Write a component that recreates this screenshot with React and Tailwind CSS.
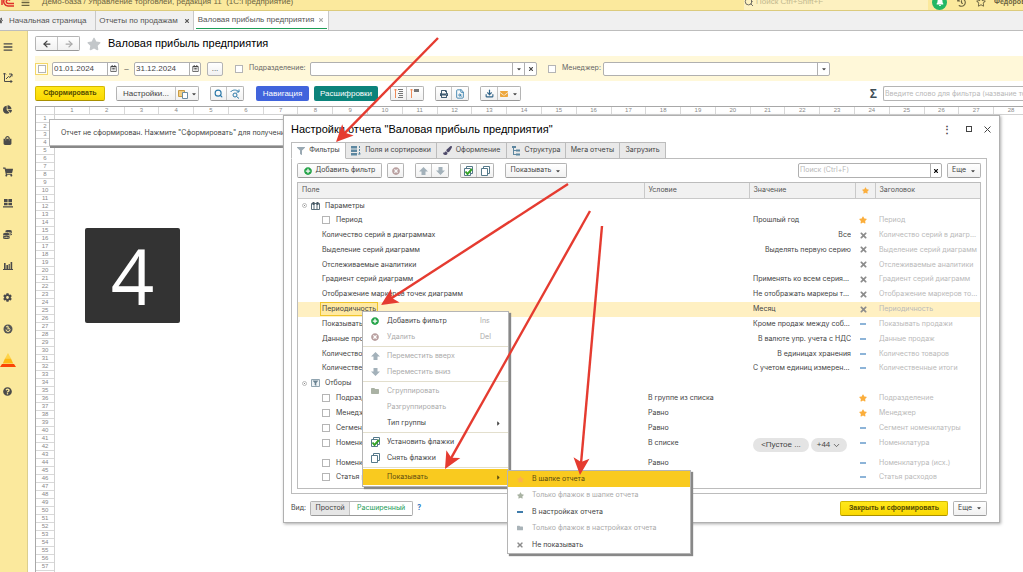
import React from 'react';
import {
    FaBars, FaChartPie, FaShoppingBag, FaShoppingCart, FaCog, FaQuestionCircle, FaStar, FaTimes,
    FaCaretDown, FaCaretRight, FaPlusCircle, FaTimesCircle, FaPrint, FaEnvelope, FaFilter, FaRegStar,
    FaHistory, FaBell, FaRegCalendarAlt, FaPaintBrush, FaHome, FaFolder, FaCoins,
} from 'react-icons/fa';
import { Search, ArrowLeft, ArrowRight, ChevronDown, Download, FileSearch } from 'lucide-react';

const BTN = 'flex items-center justify-center bg-linear-to-b from-white to-[#f1f1f1] text-[#444]';
const GROUP = 'flex h-[15px] shrink-0 rounded-xs border border-[#b4b4b4] border-b-[#999] divide-x divide-[#c4c4c4] overflow-hidden';
const SMALL = "font-['Inter','Liberation_Sans',sans-serif] text-[7px]";
const YELLOW = 'h-[15px] rounded-xs border border-[#d4b800] border-b-[#a89000] bg-linear-to-b from-[#ffe81a] to-[#fad800] text-[7px] font-bold text-[#554b00]';

/* ---------- small icons ---------- */

const Pyramid = () => (
    <svg width="16" height="14" viewBox="0 0 16 14">
        <path d="M8 0l3 5.5H5z" fill="#fdd44a" />
        <path d="M5 5.5h6l2.2 5H2.8z" fill="#fdb913" />
        <path d="M2 11h12l2 3H0z" fill="#fb4406" />
    </svg>
);

const Coin = () => (
    <svg width="10" height="10" viewBox="0 0 10 10">
        <circle cx="5" cy="5" r="4.5" fill="#555" />
        <path d="M3 3l2-1v3.5M3 5.5a2 2 0 1 0 4 0a2 2 0 0 0-2-1.6" stroke="#f9e99a" fill="none" />
    </svg>
);

const Desk = () => (
    <svg width="10" height="10" viewBox="0 0 10 10" fill="#4a4a4a">
        <path d="M1 1h3.6v3H1zM5.4 1H9v3H5.4zM1 4.7h3.6v2.6H1zM5.4 4.7H9v2.6H5.4zM0 8.2h10v1.3H0z" />
    </svg>
);

const Plan = () => (
    <svg width="10" height="11" viewBox="0 0 10 11" stroke="#4a4a4a" fill="none">
        <path d="M1.5 1v8.5H9M0 2.5L1.5 1 3 2.5M3 7l2.5-2.5L7 5.5 9 2M6 2h3v2.500M7.500 8L9 9.500 7.500 11" />
    </svg>
);

const Bars = () => (
    <svg width="10" height="9" viewBox="0 0 10 9" fill="#4a4a4a">
        <path d="M0 8h10v1H0zM1 2h1.6v6H1zM3.4 4H5v4H3.4zM5.6 3h1.2v5H5.6zM7.6 1h1.6v7H7.6z" />
    </svg>
);

const Logo = () => (
    <svg width="15" height="14" viewBox="0 0 15 14" fill="none" stroke="#e0302a" strokeWidth="1.5">
        <path d="M0 4l2-2v8M12 4a4.5 4.5 0 1 0-4 7h6M10 5.5A2 2 0 1 0 8 8.5h6" />
    </svg>
);

const Move = ({ up }) => (
    <svg width="9" height="8" viewBox="0 0 9 8" fill="#a3b1ba">
        {up ? <path d="M4.500 0L9 4.500H6.500V8h-4V4.500H0z" /> : <path d="M4.500 8L0 3.500h2.500V0h4v3.500H9z" />}
    </svg>
);

const Boxes = ({ checked }) => (
    <svg width="9" height="10" viewBox="0 0 9 10" fill="#fff" stroke="#55798a">
        <path d="M2.500.5h6v7h-6z" />
        <path d="M.5 2.500h6v7h-6z" />
        {checked && <path d="M1.500 5.500l2 2.500L8 3" stroke="#36a329" strokeWidth="2" fill="none" />}
    </svg>
);

const Fields = () => (
    <svg width="10" height="10" viewBox="0 0 10 10">
        <path d="M0 0h6v2.500H0zM0 3.500h6V6H0zM0 7h6v2.500H0z" fill="#5d87a0" />
        <path d="M8.500 0v9M7.200 7.500l1.300 1.700 1.200-1.700" stroke="#5d87a0" strokeDasharray="2 1" fill="none" />
    </svg>
);

const Tree = () => (
    <svg width="9" height="10" viewBox="0 0 9 10" fill="#5d87a0">
        <path d="M0 0h4v2H0zM1 2h1v7H1zM1 4h3v1H1zM1 8h3v1H1zM4 3.500h4v2H4zM4 7.500h4v2H4z" />
    </svg>
);

const Params = () => (
    <svg width="9" height="8" viewBox="0 0 9 8">
        <path d="M.5 1.500h8v6h-8zM3 1.500v6M6 1.500v6" stroke="#5a6f7b" fill="none" />
        <path d="M1.500 0h2v3h-2zM5.500 0h2v3h-2z" fill="#4a5b66" />
    </svg>
);

const FilterBox = () => (
    <svg width="9" height="8" viewBox="0 0 9 8">
        <path d="M.5.500h8v7h-8z" stroke="#90a4b0" fill="#eef3f6" />
        <path d="M1.500 1.500h6L5.300 4v3L3.700 6V4z" fill="#6b8392" />
    </svg>
);

const Dash = ({ dark }) => <span className={`inline-block h-[2px] w-1.5 ${dark ? 'bg-[#3f7cab]' : 'bg-[#8db4d8]'}`} />;

const Levels = ({ short }) => (
    <svg width="10" height="11" viewBox="0 0 10 11">
        <path d="M1.500 1v9M0 2.500L1.500 1 3 2.500" stroke="#ee8c5a" fill="none" />
        <path d={short ? 'M4 1h5v3H4z' : 'M4 1h5v1H4zM5 3h4v1H5zM4 5h5v1H4zM5 7h4v1H5zM4 9h5v1H4z'} fill="#777" />
    </svg>
);

const Variants = () => (
    <svg width="11" height="10" viewBox="0 0 11 10">
        <path d="M.5 1.500h6v6h-6z" fill="#f3cf84" stroke="#c99b43" />
        <path d="M4.500 3.500h5v6h-5z" fill="#fff" stroke="#6c8da3" />
    </svg>
);

const Refind = () => (
    <svg width="10" height="10" viewBox="0 0 10 10" fill="none" stroke="#2b78a8">
        <path d="M.5 3C2.500.5 6.500.5 8.500 2.500M9 .5v2.500H6.500" />
        <circle cx="5" cy="6" r="2" />
        <path d="M6.500 7.500L9 9.500" />
    </svg>
);

const Check = ({ label }) => (
    <input
        type="checkbox"
        aria-label={label}
        className="block h-2 w-2 shrink-0 appearance-none border border-[#b5b5b5] bg-white"
    />
);

/* ---------- data ---------- */

const sections = [
    { title: 'Меню', icon: <FaBars size={10} /> },
    { title: 'Планирование', icon: <Plan /> },
    { title: 'CRM', icon: <FaChartPie size={9} /> },
    { title: 'Продажи', icon: <FaShoppingBag size={9} /> },
    { title: 'Закупки', icon: <FaShoppingCart size={10} /> },
    { title: 'Склад', icon: <Desk /> },
    { title: 'Казначейство', icon: <FaCoins size={9} /> },
    { title: 'Финансы', icon: <Bars /> },
    { title: 'Настройки', icon: <FaCog size={9} /> },
    { title: 'Валюта', icon: <Coin /> },
    { title: 'Отчеты', icon: <Pyramid /> },
    { title: 'Помощь', icon: <FaQuestionCircle size={9} /> },
];

const rows = [
    { group: 'Параметры', icon: <Params /> },
    { name: 'Период', check: true, value: 'Прошлый год', mark: 'star', title: 'Период' },
    { name: 'Количество серий в диаграммах', value: 'Все', right: true, mark: 'x', title: 'Количество серий в диаграммах' },
    { name: 'Выделение серий диаграмм', value: 'Выделять первую серию', right: true, mark: 'x', title: 'Выделение серий диаграмм' },
    { name: 'Отслеживаемые аналитики', mark: 'x', title: 'Отслеживаемые аналитики' },
    { name: 'Градиент серий диаграмм', value: 'Применять ко всем сериям диаграмм', mark: 'x', title: 'Градиент серий диаграмм' },
    { name: 'Отображение маркеров точек диаграмм', value: 'Не отображать маркеры точек', mark: 'x', title: 'Отображение маркеров точек' },
    { name: 'Периодичность', value: 'Месяц', mark: 'x', title: 'Периодичность', active: true },
    { name: 'Показывать продажи', value: 'Кроме продаж между собственными', mark: 'dash', title: 'Показывать продажи' },
    { name: 'Данные продаж', value: 'В валюте упр. учета с НДС', right: true, mark: 'dash', title: 'Данные продаж' },
    { name: 'Количество товаров', value: 'В единицах хранения', right: true, mark: 'dash', title: 'Количество товаров' },
    { name: 'Количественные итоги', value: 'С учетом единиц измерения товаров', mark: 'dash', title: 'Количественные итоги' },
    { group: 'Отборы', icon: <FilterBox /> },
    { name: 'Подразделение', check: true, cond: 'В группе из списка', mark: 'star', title: 'Подразделение' },
    { name: 'Менеджер', check: true, cond: 'Равно', mark: 'star', title: 'Менеджер' },
    { name: 'Сегмент номенклатуры', check: true, cond: 'Равно', mark: 'dash', title: 'Сегмент номенклатуры' },
    { name: 'Номенклатура', check: true, cond: 'В списке', mark: 'dash', title: 'Номенклатура', chips: true },
    { name: 'Номенклатура (исх.)', check: true, cond: 'Равно', mark: 'dash', title: 'Номенклатура (исх.)' },
    { name: 'Статья расходов', check: true, mark: 'dash', title: 'Статья расходов' },
];

const marks = {
    star: <FaStar size={8} className="text-[#fbae3c]" />,
    x: <FaTimes size={9} className="text-[#8c8c8c]" />,
    dash: <Dash />,
};

const dialogTabs = [
    { label: 'Фильтры', icon: <FaFilter size={8} className="text-[#9aa9b3]" />, width: 'w-[55px]' },
    { label: 'Поля и сортировки', icon: <Fields />, width: 'w-[91px]' },
    { label: 'Оформление', icon: <FaPaintBrush size={9} className="text-[#4e4a6a]" />, width: 'w-[70px]' },
    { label: 'Структура', icon: <Tree />, width: 'w-[59px]' },
    { label: 'Мега отчеты', width: 'w-[54px]' },
    { label: 'Загрузить', width: 'w-[46px]' },
];

const menuItems = [
    { label: 'Добавить фильтр', key: 'Ins', icon: <FaPlusCircle size={8} className="text-[#22a347]" /> },
    { label: 'Удалить', key: 'Del', off: true, icon: <FaTimesCircle size={8} className="text-[#b9a0a0]" />, line: true },
    { label: 'Переместить вверх', off: true, icon: <Move up /> },
    { label: 'Переместить вниз', off: true, icon: <Move />, line: true },
    { label: 'Сгруппировать', off: true, icon: <FaFolder size={8} className="text-[#aab2a4]" /> },
    { label: 'Разгруппировать', off: true },
    { label: 'Тип группы', more: true, line: true },
    { label: 'Установить флажки', icon: <Boxes checked /> },
    { label: 'Снять флажки', icon: <Boxes />, line: true },
    { label: 'Показывать', more: true, active: true },
];

const showItems = [
    { label: 'В шапке отчета', active: true, icon: <FaStar size={7} className="text-[#fdb04a]" /> },
    { label: 'Только флажок в шапке отчета', off: true, icon: <FaStar size={7} className="text-[#a9b3a3]" /> },
    { label: 'В настройках отчета', icon: <Dash dark /> },
    { label: 'Только флажок в настройках отчета', off: true, icon: <FaFolder size={6} className="text-[#a9b3b8]" /> },
    { label: 'Не показывать', icon: <FaTimes size={8} className="text-[#8c8c8c]" /> },
];

const arrows = [
    [438, 38, 336, 142],
    [568, 184, 381, 305],
    [590, 211, 445, 469],
    [602, 226, 580, 475],
];

/* ---------- parts ---------- */

const TopBar = () => (
    <header className="flex h-[11px] shrink-0 items-end overflow-hidden border-b border-[#dccb7c] bg-[#fbe99d] text-[8px] text-[#6b6340]">
        <div className="flex h-4 w-full items-center">
            <Logo />
            <FaBars size={9} className="ml-1.5" />
            <span className="ml-3 whitespace-nowrap">Демо-база / Управление торговлей, редакция 11&nbsp; (1С:Предприятие)</span>
            <label className="ml-auto flex h-full w-[184px] items-center gap-0.5 bg-[#fdf1c0]">
                <Search size={10} className="shrink-0 text-[#555]" />
                <input aria-label="Поиск" placeholder="Поиск Ctrl+Shift+F" className="w-full placeholder:text-[#c2b88e]" />
            </label>
            <span className="ml-1 flex h-[15px] w-[15px] items-center justify-center rounded-full bg-[#22b765] text-white"><FaBell size={8} /></span>
            <FaHistory size={9} className="ml-2.5" />
            <FaRegStar size={10} className="ml-2.5" />
            <span className="ml-2 w-[29px] overflow-hidden whitespace-nowrap text-[7px] font-bold">Федоров</span>
        </div>
    </header>
);

const PageTabs = () => (
    <nav className="flex h-5 shrink-0 border-b border-[#bdbdbd] bg-[#f0f0f0] text-[8px] text-[#555]">
        <a href="#home" className="flex w-24 items-center gap-1.5 overflow-hidden whitespace-nowrap border-r border-[#c8c8c8]">
            <FaHome size={7} className="-ml-1 shrink-0" />
            Начальная страница
        </a>
        <a href="#sales" className="flex w-[98px] items-center justify-center gap-1.5 whitespace-nowrap border-r border-[#c8c8c8]">
            Отчеты по продажам <FaTimes size={6} />
        </a>
        <a href="#profit" className="flex w-[135px] justify-center border-r border-[#c8c8c8] bg-white">
            <span className="mb-px flex w-[131px] items-center justify-center gap-1 whitespace-nowrap border-b border-[#1e9d57]">
                Валовая прибыль предприятия <FaTimes size={6} className="text-[#aaa]" />
            </span>
        </a>
    </nav>
);

const DateField = ({ label, value }) => (
    <div className="flex h-[14px] w-[67px] rounded-xs border border-[#b0b0b0] bg-white">
        <input aria-label={label} defaultValue={value} className="w-[54px] pl-px" />
        <button aria-label="Календарь" className="flex flex-1 items-center justify-center border-l border-[#b0b0b0]"><FaRegCalendarAlt size={7} /></button>
    </div>
);

const Filters = () => (
    <section className="flex h-[25px] shrink-0 items-center bg-[#fff8d9] text-[8px] text-[#444]">
        <span className="flex h-3 w-[13px] items-center justify-center border border-[#f4d768] bg-[#fffdf2]"><Check label="Период" /></span>
        <div className="ml-1"><DateField label="Начало периода" value="01.01.2024" /></div>
        <span className="w-[15px] text-center">–</span>
        <DateField label="Конец периода" value="31.12.2024" />
        <button aria-label="Выбрать период" className={`${BTN} ml-1.5 h-[14px] w-4 rounded-xs border border-[#b4b4b4]`}>...</button>
        <label className={`ml-3 flex w-[75px] items-center gap-1.5 whitespace-nowrap text-[#666] ${SMALL}`}><Check /> Подразделение:</label>
        <div className="flex h-[14px] w-[227px] rounded-xs border border-[#b0b0b0] bg-white">
            <input aria-label="Подразделение" className="min-w-0 flex-1" />
            <button aria-label="Выбрать" className="flex w-3 items-center justify-center border-l border-[#b0b0b0]"><FaCaretDown size={6} /></button>
            <button aria-label="Очистить" className="flex w-3 items-center justify-center border-l border-[#b0b0b0]"><FaTimes size={6} /></button>
        </div>
        <label className={`ml-[11px] flex w-[55px] items-center gap-1.5 whitespace-nowrap text-[#666] ${SMALL}`}><Check /> Менеджер:</label>
        <div className="flex h-[14px] w-[227px] rounded-xs border border-[#b0b0b0] bg-white">
            <input aria-label="Менеджер" className="min-w-0 flex-1" />
            <button aria-label="Выбрать" className="flex w-3 items-center justify-center border-l border-[#b0b0b0]"><FaCaretDown size={6} /></button>
        </div>
    </section>
);

const ReportToolbar = () => (
    <section className="flex h-[25px] shrink-0 items-center text-[8px]">
        <button className={`${YELLOW} w-[70px]`}>Сформировать</button>
        <div className={`${GROUP} ml-[11px]`}>
            <button className={`${BTN} w-[59px]`}>Настройки...</button>
            <button aria-label="Варианты" className={`${BTN} w-[22px] gap-0.5`}><Variants /><FaCaretDown size={6} /></button>
        </div>
        <div className={`${GROUP} ml-[11px]`}>
            <button aria-label="Найти" className={`${BTN} w-4`}><Search size={9} strokeWidth={3} className="text-[#2b78a8]" /></button>
            <button aria-label="Искать далее" className={`${BTN} w-4`}><Refind /></button>
        </div>
        <button className="ml-3 h-[15px] w-[53px] rounded-xs bg-[#4164dc] text-white">Навигация</button>
        <button className="ml-[5px] h-[15px] w-16 rounded-xs bg-[#0c837b] text-white">Расшифровки</button>
        <div className={`${GROUP} ml-3`}>
            <button aria-label="Развернуть" className={`${BTN} w-4`}><Levels /></button>
            <button aria-label="Свернуть" className={`${BTN} w-4`}><Levels short /></button>
        </div>
        <div className={`${GROUP} ml-[11px]`}>
            <button aria-label="Печать" className={`${BTN} w-4`}><FaPrint size={8} className="text-[#3f5b70]" /></button>
            <button aria-label="Просмотр" className={`${BTN} w-4`}><FileSearch size={10} className="text-[#2b78a8]" /></button>
        </div>
        <div className={`${GROUP} ml-[11px]`}>
            <button aria-label="Сохранить" className={`${BTN} w-[17px]`}><Download size={9} strokeWidth={3} className="text-[#2f6287]" /></button>
            <button aria-label="Отправить" className={`${BTN} w-[22px] gap-1`}><FaEnvelope size={8} className="text-[#eda63c]" /><FaCaretDown size={6} /></button>
        </div>
        <span className="ml-auto text-[12px] font-bold text-[#3d4d57]">Σ</span>
        <input aria-label="Фильтр" placeholder="Введите слово для фильтра (название товара)" className={`ml-1.5 h-[15px] w-[140px] rounded-l-xs border border-r-0 border-[#b4b4b4] pl-px placeholder:text-[#b8b8b8] ${SMALL}`} />
    </section>
);

const Sheet = () => (
    <section className="relative flex min-h-0 flex-1 overflow-hidden border-l border-t border-[#a8a8a8] text-[6px] leading-[7px] text-[#888]">
        <div className="w-[19px] shrink-0 border-r border-[#d2d2d2] text-center">
            <div className="h-2 border-b border-[#d8d8d8]" />
            {Array.from({ length: 57 }, (_, i) => (
                <div key={i} className="h-2 border-b border-[#d8d8d8]">{i + 1}</div>
            ))}
        </div>
        <div className="-mr-[6px] flex h-2 flex-1 border-b border-[#d2d2d2] text-center">
            {Array.from({ length: 28 }, (_, i) => (
                <div key={i} className="flex-1 border-r border-[#d8d8d8]">{i + 1}</div>
            ))}
        </div>
        <div className={`absolute left-[13px] top-3 flex h-[27px] w-[400px] items-center whitespace-nowrap border border-[#b5b5b5] bg-white pl-[11px] text-[#444] shadow-[1px_2px_0_#888] ${SMALL}`}>
            Отчет не сформирован. Нажмите "Сформировать" для получения отчета.
        </div>
        <div className="absolute left-[49px] top-[121px] flex h-[95px] w-[95px] items-center justify-center rounded-xs bg-[#333] font-['Open_Sans',sans-serif] text-[76px] leading-none text-white">
            4
        </div>
    </section>
);

const SettingsTable = () => (
    <div className="flex-1 border border-[#bcbcbc]">
        <table className={`h-[302px] w-full table-fixed border-collapse leading-[10px] text-[#444] ${SMALL}`}>
            <colgroup>
                <col />
                <col className="w-[105px]" />
                <col className="w-[106px]" />
                <col className="w-5" />
                <col className="w-[105px]" />
            </colgroup>
            <thead>
                <tr className="h-[15px] border-b border-[#c9c9c9] bg-[#f1f1f1] text-left text-[#555]">
                    <th className="border-r border-[#c9c9c9] p-0 pl-1 font-normal">Поле</th>
                    <th className="border-r border-[#c9c9c9] p-0 pl-1 font-normal">Условие</th>
                    <th className="border-r border-[#c9c9c9] p-0 pl-1 font-normal">Значение</th>
                    <th className="border-r border-[#c9c9c9] p-0" aria-label="Избранное"><FaStar size={7} className="mx-auto text-[#fbae3c]" /></th>
                    <th className="p-0 pl-1 font-normal">Заголовок</th>
                </tr>
            </thead>
            <tbody>
                {rows.map((row) => row.group ? (
                    <tr key={row.group} className="h-[14px]">
                        <td colSpan={5} className="p-0">
                            <div className="flex items-center pl-1">
                                <span className="flex h-[5px] w-[5px] items-center justify-center rounded-full border border-[#bbb]"><span className="h-px w-px bg-[#888]" /></span>
                                <span className="ml-1 mr-[5px]">{row.icon}</span>
                                {row.group}
                            </div>
                        </td>
                    </tr>
                ) : (
                    <tr key={row.name} className={row.active ? 'h-[14px] bg-[#fff0c2]' : row.chips ? 'h-[19px]' : 'h-[14px]'}>
                        <td className="p-0">
                            <div className={`flex items-center whitespace-nowrap pl-6 ${row.chips ? 'pb-1' : ''}`}>
                                {row.check && <Check label={row.name} />}
                                <span className={row.check ? 'ml-1.5' : row.active ? '-ml-0.5 border border-[#f0c52c] bg-[#ffe9a0] px-px leading-[12px]' : ''}>{row.name}</span>
                            </div>
                        </td>
                        <td className={`p-0 pl-1 ${row.chips ? 'pb-1' : ''}`}>{row.cond}</td>
                        <td className="px-1 py-0">
                            {row.chips ? (
                                <div className="flex gap-0.5 font-['Liberation_Sans',sans-serif] text-[8px]">
                                    <button className="h-[14px] w-14 rounded-full bg-[#e4e4e4]">&lt;Пустое ...</button>
                                    <button className="flex h-[14px] w-9 items-center justify-center gap-0.5 rounded-full bg-[#e4e4e4]">+44 <ChevronDown size={9} /></button>
                                </div>
                            ) : (
                                <div className={`truncate ${row.right ? 'text-right' : ''}`}>{row.value}</div>
                            )}
                        </td>
                        <td className={`p-0 ${row.chips ? 'pb-1' : ''}`}><div className="flex items-center justify-center pr-1">{marks[row.mark]}</div></td>
                        <td className={`py-0 pl-1 pr-0.5 text-[#b9b9b9] ${row.chips ? 'pb-1' : ''}`}><div className="truncate">{row.title}</div></td>
                    </tr>
                ))}
            </tbody>
        </table>
    </div>
);

const SettingsDialog = () => (
    <div role="dialog" aria-label="Настройки отчета" className="absolute left-[283px] right-[23px] top-[115px] flex h-[408px] flex-col border border-[#b0b0b0] bg-white pl-[7px] pr-3 shadow-[1px_1px_3px_#aaa]">
        <div className="flex h-[26px] shrink-0 items-center">
            <h2 className="text-[11px] text-black">Настройки отчета "Валовая прибыль предприятия"</h2>
            <button aria-label="Меню" className="ml-auto text-[10px] font-bold text-[#444]">⋮</button>
            <button aria-label="Развернуть" className="ml-3.5 h-1.5 w-1.5 border border-[#444]" />
            <button aria-label="Закрыть" className="-mr-1 ml-3 text-[#444]">
                <svg width="7" height="7" viewBox="0 0 7 7" stroke="currentColor"><path d="M.5.5l6 6M6.500.5l-6 6" /></svg>
            </button>
        </div>
        <div role="tablist" className={`z-10 -mb-px flex h-[17px] shrink-0 text-[#444] ${SMALL}`}>
            {dialogTabs.map((tab, i) => (
                <button
                    key={tab.label}
                    role="tab"
                    aria-selected={i === 0}
                    className={`flex items-center justify-center gap-1 whitespace-nowrap border border-l-0 border-[#bcbcbc] first:border-l ${tab.width} ${i === 0 ? 'border-b-white bg-white' : 'bg-[#e9e9e9]'}`}
                >
                    {tab.icon}
                    {tab.label}
                </button>
            ))}
        </div>
        <div className="flex min-h-0 flex-1 flex-col border border-[#bcbcbc] px-[5px] pb-1">
            <div className={`flex h-[23px] shrink-0 items-center ${SMALL}`}>
                <div className={GROUP}><button className={`${BTN} w-[83px] gap-1`}><FaPlusCircle size={8} className="text-[#22a347]" /> Добавить фильтр</button></div>
                <div className={`${GROUP} ml-[5px]`}><button aria-label="Удалить" className={`${BTN} w-[15px]`}><FaTimesCircle size={8} className="text-[#b9a0a0]" /></button></div>
                <div className={`${GROUP} ml-[11px]`}>
                    <button aria-label="Вверх" className={`${BTN} w-4`}><Move up /></button>
                    <button aria-label="Вниз" className={`${BTN} w-4`}><Move /></button>
                </div>
                <div className={`${GROUP} ml-[11px]`}>
                    <button aria-label="Установить флажки" className={`${BTN} w-4`}><Boxes checked /></button>
                    <button aria-label="Снять флажки" className={`${BTN} w-4`}><Boxes /></button>
                </div>
                <div className={`${GROUP} ml-[11px]`}><button className={`${BTN} w-[60px] gap-1`}>Показывать <FaCaretDown size={6} /></button></div>
                <div className="ml-auto flex h-[15px] w-36 rounded-xs border border-[#b0b0b0]">
                    <input aria-label="Поиск" placeholder="Поиск (Ctrl+F)" className="min-w-0 flex-1 pl-px placeholder:text-[#b8b8b8]" />
                    <button aria-label="Очистить" className="flex w-[11px] items-center justify-center border-l border-[#b0b0b0]"><FaTimes size={6} /></button>
                </div>
                <div className={`${GROUP} ml-[5px]`}><button className={`${BTN} w-8 gap-1`}>Еще <FaCaretDown size={6} /></button></div>
            </div>
            <SettingsTable />
        </div>
        <div className={`flex h-[28px] shrink-0 items-center text-[#444] ${SMALL}`}>
            <span>Вид:</span>
            <div className={`${GROUP} ml-1`}>
                <button className="w-[39px] bg-[#e6e6e6]">Простой</button>
                <button className="w-[62px] bg-white text-[#1e9d57]">Расширенный</button>
            </div>
            <a href="#help" className="ml-1 font-bold text-[#2b78c0]">?</a>
            <button className={`${YELLOW} ml-auto w-[108px] font-['Liberation_Sans',sans-serif]`}>Закрыть и сформировать</button>
            <div className={`${GROUP} ml-[5px]`}><button className={`${BTN} w-8 gap-1`}>Еще <FaCaretDown size={6} /></button></div>
        </div>
    </div>
);

const MenuItem = ({ item, className }) => (
    <button
        role="menuitem"
        disabled={item.off}
        className={`flex w-full items-center text-left ${className} ${item.active ? 'bg-[#f9ca1f] text-[#5b4a10]' : item.off ? 'text-[#aaa]' : 'text-[#444]'}`}
    >
        <span className="flex w-6 shrink-0 items-center justify-center">{item.icon}</span>
        <span className="flex-1 whitespace-nowrap">{item.label}</span>
        {item.key && <span className="w-7 text-[#aaa]">{item.key}</span>}
        {item.more && <FaCaretRight size={7} className="mr-1.5" />}
    </button>
);

const ContextMenu = () => (
    <div role="menu" className={`absolute left-[362px] top-[311px] w-[147px] border border-[#b5b5b5] bg-white py-px shadow-[2px_2px_1px_#888] ${SMALL}`}>
        {menuItems.map((item) => (
            <React.Fragment key={item.label}>
                <MenuItem item={item} className="h-4" />
                {item.line && <hr className="my-px border-[#e3dfcd]" />}
            </React.Fragment>
        ))}
    </div>
);

const ShowMenu = () => (
    <div role="menu" className={`absolute left-[507px] top-[470px] flex h-[84px] w-[184px] flex-col border border-[#b5b5b5] bg-white shadow-[2px_2px_1px_#888] ${SMALL}`}>
        {showItems.map((item) => <MenuItem key={item.label} item={item} className="flex-1" />)}
    </div>
);

const Arrows = () => (
    <svg className="pointer-events-none absolute left-0 top-0 z-20" width="1023" height="572" viewBox="0 0 1023 572">
        {arrows.map(([x1, y1, x2, y2]) => {
            const angle = (Math.atan2(y2 - y1, x2 - x1) * 180) / Math.PI;
            const len = Math.hypot(x2 - x1, y2 - y1);
            return (
                <g key={x1} transform={`translate(${x2} ${y2}) rotate(${angle})`} fill="#e53b30" stroke="none">
                    <path d={`M${-len} -1.2H-11V1.2H${-len}z`} />
                    <path d="M0 0L-17 -8L-13 0L-17 8z" />
                </g>
            );
        })}
    </svg>
);

const App = () => {
    return (
        <div className="relative flex h-screen flex-col overflow-hidden bg-white font-['Liberation_Sans',Arial,sans-serif]">
            <TopBar />
            <PageTabs />
            <div className="flex min-h-0 flex-1">
                <aside className="flex w-7 shrink-0 flex-col border-r border-[#dccf8e] bg-[#fbe99d] text-[#4a4a4a]">
                    <div className="flex h-[376px] flex-col">
                        {sections.map((s) => (
                            <a key={s.title} href="#section" aria-label={s.title} className="flex w-[15px] flex-1 items-center justify-center">
                                <span className="shrink-0">{s.icon}</span>
                            </a>
                        ))}
                    </div>
                </aside>
                <main className="flex min-w-0 flex-1 flex-col pl-[7px]">
                    <div className="flex h-[25px] shrink-0 items-center">
                        <div className={GROUP}>
                            <button aria-label="Назад" className={`${BTN} w-[22px]`}><ArrowLeft size={10} strokeWidth={3} /></button>
                            <button aria-label="Вперед" className={`${BTN} w-[21px]`}><ArrowRight size={10} strokeWidth={3} className="text-[#aaa]" /></button>
                        </div>
                        <FaStar size={14} className="ml-[7px] text-[#c3c7ca]" />
                        <h1 className="ml-[7px] text-[11px] text-black">Валовая прибыль предприятия</h1>
                    </div>
                    <Filters />
                    <ReportToolbar />
                    <Sheet />
                </main>
            </div>
            <SettingsDialog />
            <ContextMenu />
            <ShowMenu />
            <Arrows />
        </div>
    );
};

export default App;
